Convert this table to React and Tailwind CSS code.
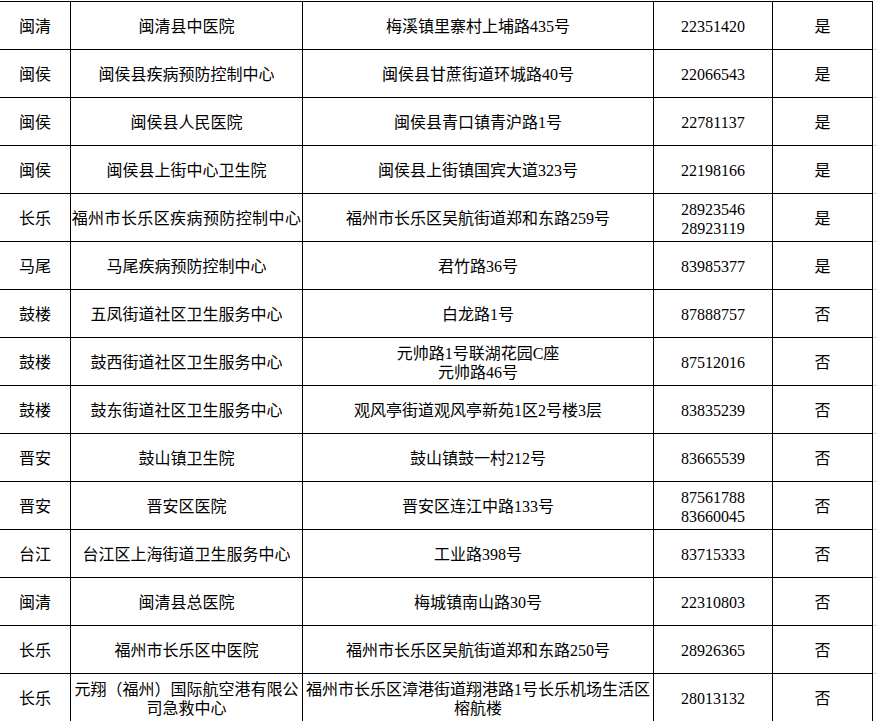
const rows = [
  ["闽清", "闽清县中医院", "梅溪镇里寨村上埔路435号", "22351420", "是"],
  ["闽侯", "闽侯县疾病预防控制中心", "闽侯县甘蔗街道环城路40号", "22066543", "是"],
  ["闽侯", "闽侯县人民医院", "闽侯县青口镇青沪路1号", "22781137", "是"],
  ["闽侯", "闽侯县上街中心卫生院", "闽侯县上街镇国宾大道323号", "22198166", "是"],
  ["长乐", "福州市长乐区疾病预防控制中心", "福州市长乐区吴航街道郑和东路259号", "28923546\n28923119", "是", true],
  ["马尾", "马尾疾病预防控制中心", "君竹路36号", "83985377", "是"],
  ["鼓楼", "五凤街道社区卫生服务中心", "白龙路1号", "87888757", "否"],
  ["鼓楼", "鼓西街道社区卫生服务中心", "元帅路1号联湖花园C座\n元帅路46号", "87512016", "否"],
  ["鼓楼", "鼓东街道社区卫生服务中心", "观风亭街道观风亭新苑1区2号楼3层", "83835239", "否"],
  ["晋安", "鼓山镇卫生院", "鼓山镇鼓一村212号", "83665539", "否"],
  ["晋安", "晋安区医院", "晋安区连江中路133号", "87561788\n83660045", "否"],
  ["台江", "台江区上海街道卫生服务中心", "工业路398号", "83715333", "否"],
  ["闽清", "闽清县总医院", "梅城镇南山路30号", "22310803", "否"],
  ["长乐", "福州市长乐区中医院", "福州市长乐区吴航街道郑和东路250号", "28926365", "否"],
  ["长乐", "元翔（福州）国际航空港有限公司急救中心", "福州市长乐区漳港街道翔港路1号长乐机场生活区榕航楼", "28013132", "否"],
];

function Cell({ children, className = "" }) {
  return (
    <div
      className={`flex h-[48px] items-center justify-center border-r border-b border-black pt-[2px] text-center leading-[19px] ${className}`}
    >
      {children}
    </div>
  );
}

export default function App() {
  return (
    <div
      className="h-[721px] overflow-hidden bg-white pt-[1px] text-[16px] text-black"
      style={{ fontFamily: '"Liberation Serif", "Noto Sans CJK SC", serif' }}
    >
      <div className="border-t border-black w-[873px]" />
      {rows.map((r, i) => (
        <div key={i} className="flex">
          <Cell className="w-[71px] px-[3px]">{r[0]}</Cell>
          {r[5] ? (
            <Cell className="w-[232px] whitespace-nowrap">
              <span className="tracking-[0.4px]">{r[1]}</span>
            </Cell>
          ) : (
            <Cell className="w-[232px] px-[3px]">{r[1]}</Cell>
          )}
          <Cell className="w-[351px] whitespace-pre-line px-[3px]">{r[2]}</Cell>
          <Cell className="w-[119px] whitespace-pre-line px-[3px]">{r[3]}</Cell>
          <Cell className="w-[100px] px-[3px]">{r[4]}</Cell>
          <div className="h-[48px] w-[4px] border-b border-[#d4d4d4]" />
        </div>
      ))}
    </div>
  );
}
